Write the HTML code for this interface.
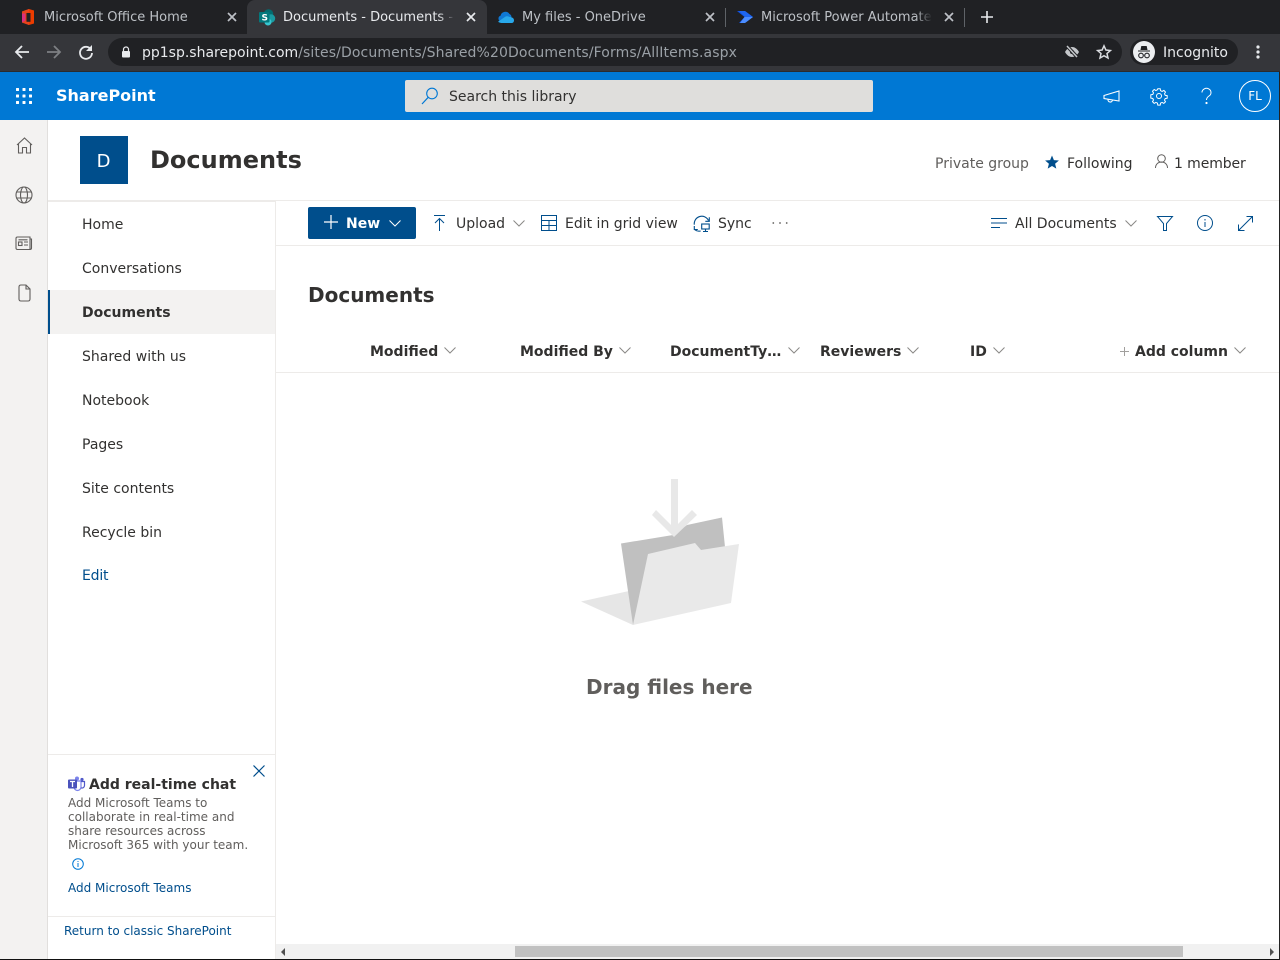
<!DOCTYPE html>
<html><head><meta charset="utf-8"><style>
html,body{margin:0;padding:0;width:1280px;height:960px;overflow:hidden;background:#fff;font-family:"DejaVu Sans",sans-serif}
.a{position:absolute;white-space:nowrap}
.t{font-size:13px;line-height:16px}
svg{position:absolute;overflow:visible}
.nav{position:absolute;left:82px;font-size:14px;line-height:18px;color:#323130}
.h{position:absolute;top:343px;font-size:14px;line-height:18px;font-weight:700;color:#323130;white-space:nowrap}
</style></head><body>
<!-- Chrome -->
<div class="a" style="left:0;top:0;width:1280px;height:34px;background:#202124"></div>
<div class="a" style="left:0;top:34px;width:1280px;height:38px;background:#35363a;border-bottom:1px solid #2a2b2e;box-sizing:border-box"></div>
<div class="a" style="left:247px;top:0;width:240px;height:34px;background:#35363a;border-radius:8px 8px 0 0"></div>
<svg style="left:20px;top:8px" width="16" height="18" viewBox="0 0 16 18"><path d="M2 3.500 9 1l5 1.500v13L9 17l-7-2.500z" fill="#eb3c00"/><path d="M2 3.500 9 1v3L5.500 5.500v7L9 14v3l-7-2.500z" fill="#e8431c"/><path d="M2 5.500 5.500 5.500v7L2 14.500z" fill="#d9307e"/><path d="M6.500 5h4v8.800h-4z" fill="#202124"/></svg>
<div class="a t" style="left:44px;top:10px;color:#bdc1c6">Microsoft Office Home</div>
<svg style="left:227px;top:12px" width="10" height="10"><path d="M1 1l8 8M9 1l-8 8" stroke="#bdc1c6" stroke-width="1.700"/></svg>
<svg style="left:259px;top:9px" width="17" height="17"><circle cx="9.500" cy="5" r="4.800" fill="#036c70"/><circle cx="12" cy="9.500" r="4.200" fill="#1a9ba1"/><circle cx="9" cy="13" r="3.500" fill="#37c6d0"/><rect x="0" y="3" width="10.500" height="10.500" rx="1" fill="#03787c"/><text x="2.500" y="11.500" font-size="9" font-weight="700" fill="#fff" font-family="DejaVu Sans">S</text></svg>
<div class="a t" style="left:283px;top:10px;width:171px;overflow:hidden;color:#e8eaed">Documents - Documents - SharePoint</div>
<div class="a" style="left:438px;top:8px;width:17px;height:20px;background:linear-gradient(90deg,rgba(53,54,58,0),#35363a)"></div>
<svg style="left:466px;top:12px" width="10" height="10"><path d="M1 1l8 8M9 1l-8 8" stroke="#e8eaed" stroke-width="1.700"/></svg>
<svg style="left:498px;top:11px" width="16" height="12"><path d="M3 10.500a3 3 0 0 1-.5-5.800A5 5 0 0 1 11.500 3a3.500 3.500 0 0 1 2 3l-6 4.500z" fill="#0f78d4"/><path d="M3.500 12c-1 0-2.500-.4-3.500-1.200l6.500-4.600c1.500-1.200 3.500-1.200 5-.2 2.500 0 4.500 1.200 4.500 3.200 0 1.800-1 2.800-2.500 2.800z" fill="#28a8ea"/></svg>
<div class="a t" style="left:522px;top:10px;color:#bdc1c6">My files - OneDrive</div>
<svg style="left:705px;top:12px" width="10" height="10"><path d="M1 1l8 8M9 1l-8 8" stroke="#bdc1c6" stroke-width="1.700"/></svg>
<div class="a" style="left:725px;top:8px;width:1px;height:19px;background:#5f6368"></div>
<svg style="left:737px;top:10px" width="16" height="14"><path d="M0 1h8l8 6-8 6H2l5.500-6z" fill="#0f4fe0"/><path d="M2 1h6l8 6H8z" fill="#1e66f0"/><path d="M7.500 7H16l-8 6H3z" fill="#4b8dff"/></svg>
<div class="a t" style="left:761px;top:10px;width:170px;overflow:hidden;color:#bdc1c6">Microsoft Power Automate</div>
<div class="a" style="left:915px;top:8px;width:17px;height:20px;background:linear-gradient(90deg,rgba(32,33,36,0),#202124)"></div>
<svg style="left:944px;top:12px" width="10" height="10"><path d="M1 1l8 8M9 1l-8 8" stroke="#bdc1c6" stroke-width="1.700"/></svg>
<div class="a" style="left:964px;top:8px;width:1px;height:19px;background:#5f6368"></div>
<svg style="left:981px;top:11px" width="12" height="12"><path d="M6 0v12M0 6h12" stroke="#e8eaed" stroke-width="1.600"/></svg>
<svg style="left:14px;top:44px" width="16" height="16"><path d="M15 8H2M8 2 2 8l6 6" fill="none" stroke="#e8eaed" stroke-width="1.800"/></svg>
<svg style="left:46px;top:44px" width="16" height="16"><path d="M1 8h13M8 2l6 6-6 6" fill="none" stroke="#7e8083" stroke-width="1.800"/></svg>
<svg style="left:78px;top:44px" width="16" height="16"><path d="M13 5.500A6 6 0 1 0 14 9" fill="none" stroke="#e8eaed" stroke-width="1.800"/><path d="M14 1v6H8z" fill="#e8eaed"/></svg>
<div class="a" style="left:108px;top:38px;width:1014px;height:28px;background:#202124;border-radius:14px"></div>
<svg style="left:121px;top:46px" width="10" height="12"><path d="M2.500 5V3.500a2.500 2.500 0 0 1 5 0V5" fill="none" stroke="#e8eaed" stroke-width="1.200"/><rect x="1" y="5" width="8" height="6.500" rx="1" fill="#e8eaed"/></svg>
<div class="a" style="left:142px;top:44px;font-size:14px;line-height:18px;color:#e8eaed">pp1sp.sharepoint.com<span style="color:#9aa0a6;letter-spacing:.11px">/sites/Documents/Shared%20Documents/Forms/AllItems.aspx</span></div>
<svg style="left:1064px;top:45px" width="16" height="14"><path d="M1 7c2-3.500 4.500-5 7-5s5 1.500 7 5c-2 3.500-4.500 5-7 5s-5-1.500-7-5z" fill="#c4c7ca"/><circle cx="8" cy="7" r="2" fill="#202124"/><path d="M3 1l11 12" stroke="#202124" stroke-width="3.500"/><path d="M3 1l10 11" stroke="#c4c7ca" stroke-width="1.500"/></svg>
<svg style="left:1096px;top:44px" width="16" height="16"><path d="M8 1.800l1.900 4.200 4.500.5-3.400 3 1 4.500L8 11.700 4 14l1-4.500-3.400-3 4.500-.5z" fill="none" stroke="#dadce0" stroke-width="1.500"/></svg>
<div class="a" style="left:1130px;top:39px;width:108px;height:26px;background:#202124;border-radius:13px"></div>
<svg style="left:1133px;top:41px" width="22" height="22"><circle cx="11" cy="11" r="11" fill="#eceef0"/><path d="M7.500 9 8.300 5h5.400l.8 4zM5 9.500h12v1H5z" fill="#202124"/><circle cx="8" cy="14.500" r="2.300" fill="none" stroke="#202124" stroke-width="1.100"/><circle cx="14" cy="14.500" r="2.300" fill="none" stroke="#202124" stroke-width="1.100"/></svg>
<div class="a" style="left:1163px;top:44px;font-size:14px;line-height:18px;color:#e8eaed">Incognito</div>
<svg style="left:1256px;top:45px" width="4" height="14"><circle cx="2" cy="2" r="1.600" fill="#e8eaed"/><circle cx="2" cy="7" r="1.600" fill="#e8eaed"/><circle cx="2" cy="12" r="1.600" fill="#e8eaed"/></svg>
<!-- Suite bar -->
<div class="a" style="left:0;top:72px;width:1280px;height:48px;background:#0078d4"></div>
<svg style="left:16px;top:88px" width="16" height="16" fill="#fff"><rect width="3" height="3" rx=".5"/><rect x="6.500" width="3" height="3" rx=".5"/><rect x="13" width="3" height="3" rx=".5"/><rect y="6.500" width="3" height="3" rx=".5"/><rect x="6.500" y="6.500" width="3" height="3" rx=".5"/><rect x="13" y="6.500" width="3" height="3" rx=".5"/><rect y="13" width="3" height="3" rx=".5"/><rect x="6.500" y="13" width="3" height="3" rx=".5"/><rect x="13" y="13" width="3" height="3" rx=".5"/></svg>
<div class="a" style="left:56px;top:86px;font-size:16px;line-height:20px;font-weight:700;color:#fff">SharePoint</div>
<div class="a" style="left:405px;top:80px;width:468px;height:32px;background:#dfdedc;border-radius:2px"></div>
<svg style="left:421px;top:87px" width="18" height="18"><circle cx="11" cy="6.500" r="5.300" fill="none" stroke="#0078d4" stroke-width="1.100"/><path d="M7.200 10.300 1 17" stroke="#0078d4" stroke-width="1.200"/></svg>
<div class="a" style="left:449px;top:88px;font-size:14px;line-height:18px;color:#323130">Search this library</div>
<svg style="left:1103px;top:90px" width="17" height="13" fill="none" stroke="#fff" stroke-width="1.100"><path d="M16 1v10L1 8.500V5.500zM5 9.500a2.200 2.200 0 0 0 4.500.5"/></svg>
<svg style="left:1151px;top:88px" width="16" height="16" viewBox="0 0 16 16" fill="none" stroke="#fff" stroke-width="1"><circle cx="8" cy="8" r="2.500"/><path d="M6.800.7h2.400l.4 2 1.500.7 1.800-1 1.600 1.700-1 1.700.7 1.500 2 .4v2.500l-2 .4-.7 1.500 1 1.700-1.700 1.600-1.700-1-1.500.7-.4 2H6.800l-.4-2-1.500-.7-1.700 1-1.700-1.700 1-1.700-.7-1.500-2-.4V6.800l2-.4.700-1.500-1-1.700 1.700-1.700 1.700 1 1.500-.7z"/></svg>
<svg style="left:1201px;top:88px" width="11" height="16" fill="none" stroke="#fff" stroke-width="1"><path d="M1 4.500a4.500 4.200 0 1 1 7 3.500C6.500 9 5.500 9.800 5.500 12"/><circle cx="5.500" cy="15" r=".6" fill="#fff"/></svg>
<div class="a" style="left:1239px;top:80px;width:32px;height:32px;box-sizing:border-box;border:1px solid #fff;border-radius:50%;color:#fff;font-size:12px;line-height:30px;text-align:center">FL</div>
<!-- App rail -->
<div class="a" style="left:0;top:120px;width:48px;height:840px;background:#f3f2f1;border-right:1px solid #e1dfdd;box-sizing:border-box"></div>
<svg style="left:15.500px;top:137px" width="17" height="17" fill="none" stroke="#605e5c" stroke-width="1.100"><path d="M1 8 8.500 1 16 8M2.500 7v9h4v-5.500h4V16h4V7"/></svg>
<svg style="left:14.500px;top:185.500px" width="18" height="18" fill="none" stroke="#605e5c" stroke-width="1.100"><circle cx="9" cy="9" r="8"/><ellipse cx="9" cy="9" rx="3.500" ry="8"/><path d="M1.500 6h15M1.500 12h15"/></svg>
<svg style="left:15px;top:236px" width="18" height="15" fill="none" stroke="#605e5c" stroke-width="1.100"><path d="M1 2.500Q1 1 2.500 1H15v12.500H2.500Q1 13.500 1 12zM15 3h1.500v9Q16.500 13.500 15 13.500"/><rect x="3.500" y="6" width="3.500" height="3.500"/><path d="M3.500 3.800h9M9 6h4M9 9h4"/></svg>
<svg style="left:17.500px;top:284px" width="13" height="18" fill="none" stroke="#605e5c" stroke-width="1.100"><path d="M1 3Q1 1 3 1h5l4 4v10q0 2-2 2H3q-2 0-2-2zM8 1v4h4"/></svg>
<!-- Site header -->
<div class="a" style="left:80px;top:136px;width:47px;height:48px;padding-right:1px;background:#004e8c;color:#fff;font-size:18px;line-height:52px;text-align:center">D</div>
<div class="a" style="left:150px;top:144px;font-size:24px;line-height:32px;font-weight:700;color:#323130">Documents</div>
<div class="a" style="left:935px;top:155px;font-size:14px;line-height:18px;color:#605e5c">Private group</div>
<svg style="left:1045px;top:155px" width="14" height="14"><path d="M7 .5l1.900 4.600 5 .4-3.800 3.200 1.200 4.900L7 11l-4.300 2.600 1.200-4.900L.1 5.500l5-.4z" fill="#004e8c"/></svg>
<div class="a" style="left:1067px;top:155px;font-size:14px;line-height:18px;color:#323130">Following</div>
<svg style="left:1155px;top:154px" width="13" height="15" fill="none" stroke="#605e5c" stroke-width="1"><circle cx="6.500" cy="4.500" r="3.800"/><path d="M.5 14c0-3.500 2.500-6 6-6s6 2.500 6 6"/></svg>
<div class="a" style="left:1174px;top:155px;font-size:14px;line-height:18px;letter-spacing:-.1px;color:#323130">1 member</div>
<div class="a" style="left:48px;top:200px;width:228px;height:2px;background:#edebe9"></div>
<div class="a" style="left:276px;top:200px;width:1004px;height:1px;background:#edebe9"></div>
<!-- Left nav -->
<div class="a" style="left:275px;top:202px;width:1px;height:758px;background:#edebe9"></div>
<div class="a" style="left:48px;top:290px;width:227px;height:44px;background:#f3f2f1"></div>
<div class="a" style="left:48px;top:290px;width:2px;height:44px;background:#004e8c"></div>
<div class="nav" style="top:216px">Home</div>
<div class="nav" style="top:260px">Conversations</div>
<div class="nav" style="top:304px;font-weight:700">Documents</div>
<div class="nav" style="top:348px">Shared with us</div>
<div class="nav" style="top:392px">Notebook</div>
<div class="nav" style="top:436px">Pages</div>
<div class="nav" style="top:480px">Site contents</div>
<div class="nav" style="top:524px">Recycle bin</div>
<div class="nav" style="top:567px;color:#004e8c;letter-spacing:-.2px">Edit</div>
<!-- Teams card -->
<div class="a" style="left:48px;top:754px;width:227px;height:1px;background:#edebe9"></div>
<svg style="left:253px;top:765px" width="12" height="12"><path d="M.5.500l11 11M11.500.500l-11 11" stroke="#004e8c" stroke-width="1.200"/></svg>
<svg style="left:68px;top:776px" width="17" height="15"><circle cx="9" cy="2.500" r="2" fill="#7b83eb"/><circle cx="14" cy="3.500" r="1.600" fill="#5059c9"/><path d="M6 5h7v6a3.500 3.500 0 0 1-7 0z" fill="none" stroke="#7b83eb" stroke-width="1.200"/><path d="M13 5.500h3.500v4a2.500 2.500 0 0 1-3.500 2.300" fill="none" stroke="#5059c9" stroke-width="1.200"/><rect y="3.500" width="9" height="9" rx="1" fill="#4b53bc"/><path d="M2 5.500h5M4.500 5.500v5.500" stroke="#fff" stroke-width="1.300"/></svg>
<div class="a" style="left:89px;top:776px;font-size:14px;line-height:18px;font-weight:700;color:#323130">Add real-time chat</div>
<div class="a" style="left:68px;top:796px;font-size:12px;line-height:14px;color:#605e5c">Add Microsoft Teams to<br>collaborate in real-time and<br>share resources across<br>Microsoft 365 with your team.</div>
<svg style="left:72px;top:858px" width="12" height="12" fill="none" stroke="#0078d4" stroke-width="1"><circle cx="6" cy="6" r="5.300"/><path d="M6 5v4M6 3v1"/></svg>
<div class="a" style="left:68px;top:880px;font-size:12px;line-height:16px;color:#004e8c">Add Microsoft Teams</div>
<div class="a" style="left:48px;top:916px;width:227px;height:1px;background:#edebe9"></div>
<div class="a" style="left:64px;top:923px;font-size:12px;line-height:16px;color:#004e8c">Return to classic SharePoint</div>
<!-- Command bar -->
<div class="a" style="left:308px;top:207px;width:108px;height:32px;background:#004e8c;border-radius:2px"></div>
<svg style="left:324px;top:215px" width="14" height="14"><path d="M7 0v14M0 7h14" stroke="#fff" stroke-width="1.200"/></svg>
<div class="a" style="left:346px;top:215px;font-size:14px;line-height:18px;font-weight:700;color:#fff">New</div>
<svg style="left:388.500px;top:220px" width="12" height="7" fill="none" stroke="#fff"><path d="M.5.500 6 6l5.500-5.500"/></svg>
<svg style="left:434px;top:215px" width="11" height="16" fill="none" stroke="#004e8c" stroke-width="1"><path d="M0 .5h11M5.500 16V3.500M1 8l4.500-4.500L10 8"/></svg>
<div class="a" style="left:456px;top:215px;font-size:14px;line-height:18px;color:#323130">Upload</div>
<svg style="left:513px;top:220px" width="12" height="7" fill="none" stroke="#8a8886"><path d="M.5.500 6 6l5.500-5.500"/></svg>
<svg style="left:541px;top:215px" width="16" height="16" fill="none" stroke="#004e8c" stroke-width="1"><path d="M.5.500h15v15H.5zM.5 5.500h15M.5 10.500h15M8 5.500v10"/></svg>
<div class="a" style="left:565px;top:215px;font-size:14px;line-height:18px;color:#323130">Edit in grid view</div>
<svg style="left:693px;top:215px" width="17" height="17" fill="none" stroke="#004e8c" stroke-width="1.100"><path d="M1.300 9.700A7.500 7.500 0 0 1 15.500 5.500M16.300 2.300v4h-4M1.500 14.500A7.500 7.500 0 0 0 7.700 16M1.300 11v3.500h3.500"/><rect x="8.700" y="9" width="7.500" height="5"/><path d="M12.500 14v2M10 16.500h5"/></svg>
<div class="a" style="left:718px;top:215px;font-size:14px;line-height:18px;color:#323130">Sync</div>
<svg style="left:772px;top:222px" width="16" height="2" fill="#605e5c"><circle cx="1.300" cy="1" r=".9"/><circle cx="8" cy="1" r=".9"/><circle cx="14.700" cy="1" r=".9"/></svg>
<svg style="left:991px;top:217px" width="16" height="12" stroke="#004e8c" stroke-width="1"><path d="M0 1.500h16M0 6h16M0 10.500h9"/></svg>
<div class="a" style="left:1015px;top:215px;font-size:14px;line-height:18px;color:#323130">All Documents</div>
<svg style="left:1125px;top:220px" width="12" height="7" fill="none" stroke="#8a8886"><path d="M.5.500 6 6l5.500-5.500"/></svg>
<svg style="left:1157px;top:215.500px" width="16" height="15" fill="none" stroke="#004e8c" stroke-width="1"><path d="M.5.500h15l-6 7v7h-3v-7z"/></svg>
<svg style="left:1196.500px;top:215px" width="16" height="16" fill="none" stroke="#004e8c" stroke-width="1"><circle cx="8" cy="8" r="7.500"/><path d="M8 7v5M8 4v1.500"/></svg>
<svg style="left:1237.500px;top:215.500px" width="15" height="15" fill="none" stroke="#004e8c" stroke-width="1"><path d="M1 14 14 1M8.500.5h6v6M.5 8.500v6h6"/></svg>
<div class="a" style="left:276px;top:245px;width:1004px;height:1px;background:#edebe9"></div>
<!-- Content -->
<div class="a" style="left:308px;top:282px;font-size:20px;line-height:26px;font-weight:700;color:#323130">Documents</div>
<div class="h" style="left:370px">Modified</div>
<svg style="left:444px;top:347px" width="12" height="7" fill="none" stroke="#8a8886"><path d="M.5.500 6 6l5.500-5.500"/></svg>
<div class="h" style="left:520px">Modified By</div>
<svg style="left:619px;top:347px" width="12" height="7" fill="none" stroke="#8a8886"><path d="M.5.500 6 6l5.500-5.500"/></svg>
<div class="h" style="left:670px">DocumentTy…</div>
<svg style="left:788px;top:347px" width="12" height="7" fill="none" stroke="#8a8886"><path d="M.5.500 6 6l5.500-5.500"/></svg>
<div class="h" style="left:820px">Reviewers</div>
<svg style="left:907px;top:347px" width="12" height="7" fill="none" stroke="#8a8886"><path d="M.5.500 6 6l5.500-5.500"/></svg>
<div class="h" style="left:970px">ID</div>
<svg style="left:993px;top:347px" width="12" height="7" fill="none" stroke="#8a8886"><path d="M.5.500 6 6l5.500-5.500"/></svg>
<svg style="left:1120px;top:347px" width="9" height="9" stroke="#a19f9d"><path d="M4.500 0v9M0 4.500h9"/></svg>
<div class="h" style="left:1135px">Add column</div>
<svg style="left:1234px;top:347px" width="12" height="7" fill="none" stroke="#8a8886"><path d="M.5.500 6 6l5.500-5.500"/></svg>
<div class="a" style="left:276px;top:372px;width:1004px;height:1px;background:#edebe9"></div>
<!-- Empty state -->
<svg style="left:560px;top:460px" width="200" height="180">
<path d="M21 141.500 69 131 73 165z" fill="#e6e6e6"/>
<path d="M61 83.500 113 75 127 65 162 57.500 165 87 134 96 73 165z" fill="#c0c0c0"/>
<path d="M73 165 88 94 135 83 141 90 179 84 171 143z" fill="#e9e9e9"/>
<path d="M111 19h7v50h-7z" fill="#e8e8e8"/>
<path d="M92 55l4-5 18 18 18-18 5 5-23 22z" fill="#e8e8e8"/>
</svg>
<div class="a" style="left:586px;top:674px;font-size:20px;line-height:26px;font-weight:700;color:#605e5c">Drag files here</div>
<!-- Scrollbar -->
<div class="a" style="left:276px;top:944px;width:1004px;height:15px;background:#f1f1f1"></div>
<div class="a" style="left:515px;top:946px;width:668px;height:11px;background:#c1c1c1"></div>
<svg style="left:280px;top:948px" width="6" height="8"><path d="M5 0v8L1 4z" fill="#505050"/></svg>
<svg style="left:1269px;top:948px" width="6" height="8"><path d="M1 0v8l4-4z" fill="#505050"/></svg>
<div class="a" style="left:0;top:959px;width:1280px;height:1px;background:#111"></div>
<div class="a" style="left:1279px;top:72px;width:1px;height:888px;background:#222"></div>
</body></html>
